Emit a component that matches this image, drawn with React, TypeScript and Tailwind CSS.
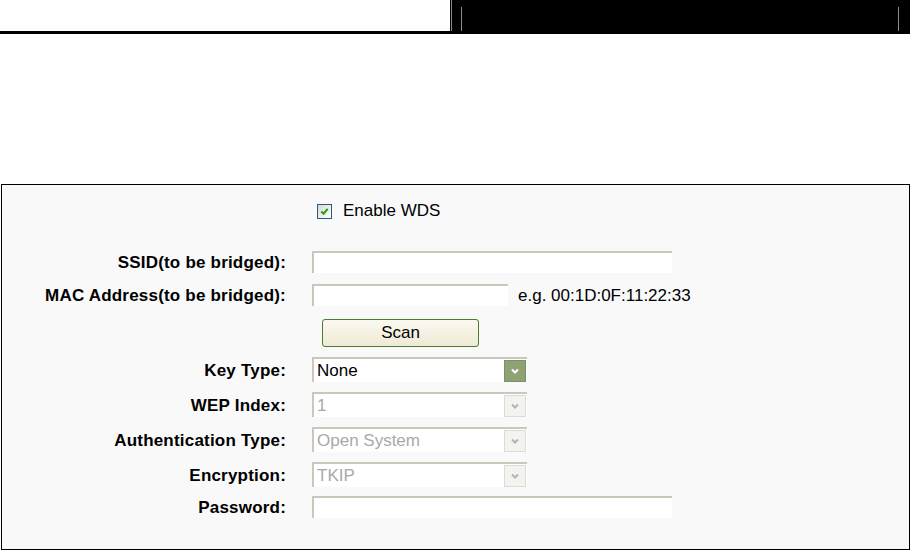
import React from 'react';

const font = "font-['Liberation_Sans',Arial,sans-serif]";

const Chevron: React.FC<{ className?: string }> = ({ className }) => (
    <svg viewBox="0 0 10 10" className={className} fill="none" stroke="currentColor" strokeWidth="2">
        <path d="M2 3.5 L5 6.5 L8 3.5" />
    </svg>
);

const TextBox: React.FC<{ width: string }> = ({ width }) => (
    <div className={`${width} h-[22px] bg-white border-t-2 border-l-2 border-[#cbc7ba]`} />
);

const Select: React.FC<{ value: string; disabled?: boolean }> = ({ value, disabled }) => (
    <div className="w-[215px] h-[25px] bg-white border-t-2 border-l-2 border-[#cbc7ba] flex items-center justify-between pl-[3px] pr-px">
        <span className={disabled ? 'text-[#a9a9a9]' : 'text-black'}>{value}</span>
        {disabled ? (
            <div className="w-[22px] h-[22px] bg-[#f3f3ef] border border-[#dcdcd4] flex items-center justify-center text-[#b5b5b0]">
                <Chevron className="w-[10px] h-[10px]" />
            </div>
        ) : (
            <div className="w-[22px] h-[22px] bg-[#8ea274] border border-[#7b9163] flex items-center justify-center text-white">
                <Chevron className="w-[10px] h-[10px]" />
            </div>
        )}
    </div>
);

const Label: React.FC<{ children: React.ReactNode }> = ({ children }) => (
    <div className="text-right font-bold text-black tracking-[0.2px] pt-[2px]">{children}</div>
);

export default function App() {
    return (
        <div className={`w-[910px] h-[551px] bg-white ${font} text-[17px] leading-[20px] overflow-hidden`}>
            {/* page header */}
            <div className="flex h-[34px]">
                <div className="w-[450px] h-full border-b-[3px] border-black" />
                <div className="flex-1 bg-black flex pl-px pb-[3px]">
                    <div className="w-px bg-[#8a8a8a]" />
                    <div className="flex-1 ml-[9px] mr-[11px] mt-[7px] border-l border-r border-[#8a8a8a]" />
                </div>
            </div>

            <div className="mt-[150px] ml-px w-[909px] h-[366px] border border-black bg-[#f9f9f9] pt-[16px]">
                <div className="grid grid-cols-[284px_1fr] gap-x-[26px] items-center">
                    <div />
                    <div className="flex items-center gap-[11px] pl-[5px] h-[20px]">
                        <div className="w-[15px] h-[15px] border border-[#2a5a8a] bg-gradient-to-br from-[#d8d8d2] to-white flex items-center justify-center">
                            <svg viewBox="0 0 10 10" className="w-[9px] h-[9px]" fill="none" stroke="#21a121" strokeWidth="2.2">
                                <path d="M1.5 5 L4 7.5 L8.5 2" />
                            </svg>
                        </div>
                        <span>Enable WDS</span>
                    </div>

                    <div className="col-span-2 h-[30px]" />

                    <Label>SSID(to be bridged):</Label>
                    <TextBox width="w-[360px]" />

                    <div className="col-span-2 h-[11px]" />

                    <Label>MAC Address(to be bridged):</Label>
                    <div className="flex items-center gap-[10px]">
                        <TextBox width="w-[196px]" />
                        <span className="pt-[2px]">e.g. 00:1D:0F:11:22:33</span>
                    </div>

                    <div className="col-span-2 h-[13px]" />

                    <div />
                    <div className="pl-[10px] h-[28px]">
                        <button className="w-[157px] h-[28px] rounded-[3px] border border-[#4e7a2c] bg-gradient-to-b from-[#fbf9f0] to-[#efead6] text-black text-[17px]">
                            Scan
                        </button>
                    </div>

                    <div className="col-span-2 h-[10px]" />

                    <Label>Key Type:</Label>
                    <Select value="None" />

                    <div className="col-span-2 h-[10px]" />

                    <Label>WEP Index:</Label>
                    <Select value="1" disabled />

                    <div className="col-span-2 h-[10px]" />

                    <Label>Authentication Type:</Label>
                    <Select value="Open System" disabled />

                    <div className="col-span-2 h-[10px]" />

                    <Label>Encryption:</Label>
                    <Select value="TKIP" disabled />

                    <div className="col-span-2 h-[9px]" />

                    <Label>Password:</Label>
                    <TextBox width="w-[360px]" />
                </div>
            </div>
        </div>
    );
}
